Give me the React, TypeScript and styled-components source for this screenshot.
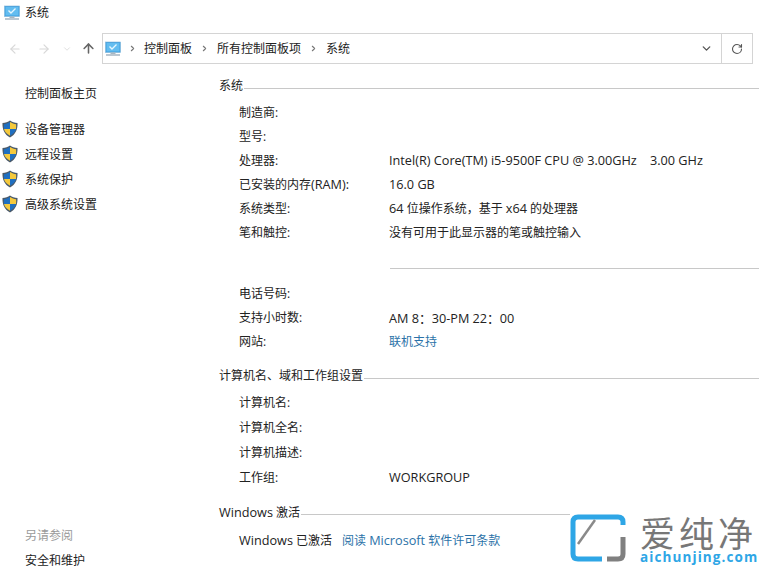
import React from "react";
import styled, { createGlobalStyle } from "styled-components";
import { ArrowLeft, ArrowRight, ArrowUp, ChevronDown, ChevronRight, RotateCw } from "lucide-react";

const GlobalStyle = createGlobalStyle`
  html, body {
    margin: 0;
    padding: 0;
    background: #fff;
  }
  body {
    font-family: "Open Sans", "Noto Sans CJK SC", sans-serif;
    font-size: 12px;
    color: #222;
  }
`;

const MonitorIcon = ({ size }: { size: number }) => (
  <svg width={size} height={size} viewBox="0 0 16 16">
    <rect x="0.5" y="1" width="15" height="10.5" fill="#3f9fe0" stroke="#7fb4d8" strokeWidth="0.6" />
    <rect x="1.5" y="2" width="13" height="8.5" fill="#63bdf0" />
    <path d="M4.5 5.5 L7 8 L11.5 3.5" stroke="#e6f7ff" strokeWidth="1.4" fill="none" />
    <rect x="5.5" y="11.5" width="5" height="1.5" fill="#a9b7c2" />
    <rect x="1" y="13.4" width="14" height="1.2" fill="#8fa3b3" />
  </svg>
);

const ShieldIcon = () => (
  <svg width="16" height="18" viewBox="0 0 16 18">
    <path d="M8 0.5 C10 2 12.5 2.8 15.5 3 C15.8 9.5 13.5 14.5 8 17.5 C2.5 14.5 0.2 9.5 0.5 3 C3.5 2.8 6 2 8 0.5 Z" fill="#4a5a6a" />
    <path d="M8 2 V9 H2 C1.8 7.5 1.8 6 1.9 4.2 C4 4 6 3.3 8 2 Z" fill="#1f6fc0" />
    <path d="M8 2 C10 3.3 12 4 14.1 4.2 C14.2 6 14.2 7.5 14 9 H8 Z" fill="#f5c93c" />
    <path d="M2 9 H8 V15.8 C4.6 14 2.7 11.8 2 9 Z" fill="#f5c93c" />
    <path d="M8 9 H14 C13.3 11.8 11.4 14 8 15.8 Z" fill="#1f6fc0" />
  </svg>
);

const sideTasks = ["设备管理器", "远程设置", "系统保护", "高级系统设置"];

const computerLabels = ["计算机名:", "计算机全名:", "计算机描述:"];

const App = () => {
  return (
    <Page>
      <GlobalStyle />
      <TitleBar>
        <MonitorIcon size={16} />
        <TitleText>系统</TitleText>
      </TitleBar>
      <NavBar>
        <NavButtons>
          <NavGlyph $faded $width={29}><ArrowLeft size={14} /></NavGlyph>
          <NavGlyph $faded $width={29}><ArrowRight size={14} /></NavGlyph>
          <NavGlyph $faded $width={18}><ChevronDown size={10} /></NavGlyph>
          <NavGlyph $width={24}><ArrowUp size={15} strokeWidth={2.5} /></NavGlyph>
        </NavButtons>
        <AddressBox>
          <MonitorIcon size={16} />
          <Crumb $first><ChevronRight size={9} strokeWidth={3} /></Crumb>
          <CrumbText>控制面板</CrumbText>
          <Crumb><ChevronRight size={9} strokeWidth={3} /></Crumb>
          <CrumbText>所有控制面板项</CrumbText>
          <Crumb><ChevronRight size={9} strokeWidth={3} /></Crumb>
          <CrumbText>系统</CrumbText>
          <AddressEnd>
            <ChevronDown size={13} strokeWidth={2.5} color="#555" />
          </AddressEnd>
          <RefreshBox>
            <RotateCw size={12} color="#555" strokeWidth={2.2} />
          </RefreshBox>
        </AddressBox>
      </NavBar>
      <Body>
        <Sidebar>
          <HomeLink>控制面板主页</HomeLink>
          <TaskList>
            {sideTasks.map((task) => (
              <Task key={task}>
                <ShieldIcon />
                <span>{task}</span>
              </Task>
            ))}
          </TaskList>
          <SeeAlso>
            <SeeAlsoTitle>另请参阅</SeeAlsoTitle>
            <span>安全和维护</span>
          </SeeAlso>
        </Sidebar>
        <Main>
          <Section $gap={12}>
            <Heading><span>系统</span></Heading>
            <Rows $step={24} $top={4}>
              <Row><RowLabel>制造商:</RowLabel></Row>
              <Row><RowLabel>型号:</RowLabel></Row>
              <Row>
                <RowLabel>处理器:</RowLabel>
                <Latin>{"Intel(R) Core(TM) i5-9500F CPU @ 3.00GHz    3.00 GHz"}</Latin>
              </Row>
              <Row>
                <RowLabel>已安装的内存<Latin>(RAM):</Latin></RowLabel>
                <Latin>16.0 GB</Latin>
              </Row>
              <Row>
                <RowLabel>系统类型:</RowLabel>
                <RowValue><Latin>64</Latin> 位操作系统，基于 <Latin>x64</Latin> 的处理器</RowValue>
              </Row>
              <Row>
                <RowLabel>笔和触控:</RowLabel>
                <RowValue>没有可用于此显示器的笔或触控输入</RowValue>
              </Row>
            </Rows>
          </Section>
          <SubRule />
          <Rows $step={24}>
            <Row><RowLabel>电话号码:</RowLabel></Row>
            <Row>
              <RowLabel>支持小时数:</RowLabel>
              <Latin>AM 8：30-PM 22：00</Latin>
            </Row>
            <Row>
              <RowLabel>网站:</RowLabel>
              <RowValue as="a" $link>联机支持</RowValue>
            </Row>
          </Rows>
          <Section $gap={13}>
            <Heading><span>计算机名、域和工作组设置</span></Heading>
            <Rows $step={25} $top={3}>
              {computerLabels.map((label) => (
                <Row key={label}><RowLabel>{label}</RowLabel></Row>
              ))}
              <Row>
                <RowLabel>工作组:</RowLabel>
                <Latin>WORKGROUP</Latin>
              </Row>
            </Rows>
          </Section>
          <Section $gap={13}>
            <Heading><span><Latin>Windows</Latin> 激活</span></Heading>
            <Rows $step={33} $top={1}>
              <Row>
                <ActivationText><Latin>Windows</Latin> 已激活</ActivationText>
                <RowValue as="a" $link>阅读 <Latin>Microsoft</Latin> 软件许可条款</RowValue>
              </Row>
              <Row><RowLabel>产品 ID:</RowLabel></Row>
            </Rows>
          </Section>
        </Main>
      </Body>
      <Watermark>
        <svg width="56" height="48" viewBox="0 0 56 48">
          <path d="M53 11 V8 Q53 3 48 3 H8 Q3 3 3 8 V40 Q3 45 8 45 H32" fill="none" stroke="#2ea6e6" strokeWidth="5" />
          <path d="M53 23 V40 Q53 45 48 45 H37" fill="none" stroke="#808080" strokeWidth="5" />
          <path d="M8 30 L25 6" stroke="#8a8a8a" strokeWidth="2.5" />
        </svg>
        <WatermarkText>
          <WatermarkName>爱纯净</WatermarkName>
          <WatermarkUrl>aichunjing.com</WatermarkUrl>
        </WatermarkText>
      </Watermark>
    </Page>
  );
};

export default App;

const Page = styled.div`
  position: relative;
  width: 759px;
  height: 566px;
  overflow: hidden;
  background: #fff;
`;

const TitleBar = styled.div`
  display: flex;
  align-items: center;
  gap: 5px;
  height: 26px;
  padding-left: 4px;
`;

const TitleText = styled.span`
  margin-bottom: 2px;
`;

const NavBar = styled.div`
  display: flex;
  align-items: center;
  height: 31px;
  margin-top: 7px;
`;

const NavButtons = styled.div`
  display: flex;
  align-items: center;
  width: 102px;
`;

const NavGlyph = styled.div<{ $faded?: boolean; $width: number }>`
  display: flex;
  justify-content: center;
  width: ${(p) => p.$width}px;
  color: ${(p) => (p.$faded ? "#d8d8d8" : "#666")};
`;

const AddressBox = styled.div`
  display: flex;
  align-items: center;
  width: 651px;
  height: 31px;
  box-sizing: border-box;
  padding-left: 2px;
  border: 1px solid #d4d4d4;
`;

const CrumbText = styled.span`
  margin-bottom: 2px;
`;

const Crumb = styled.div<{ $first?: boolean }>`
  display: flex;
  justify-content: center;
  width: ${(p) => (p.$first ? 23 : 25)}px;
  color: #777;
`;

const AddressEnd = styled.div`
  display: flex;
  justify-content: center;
  width: 30px;
  margin-left: auto;
`;

const RefreshBox = styled.div`
  display: flex;
  align-items: center;
  justify-content: center;
  width: 30px;
  height: 100%;
  border-left: 1px solid #d4d4d4;
`;

const Body = styled.div`
  display: grid;
  grid-template-columns: 219px 1fr;
  height: 502px;
`;

const Sidebar = styled.aside`
  display: flex;
  flex-direction: column;
  height: 502px;
`;

const HomeLink = styled.div`
  margin: 20px 0 0 25px;
  line-height: 20px;
`;

const TaskList = styled.div`
  display: flex;
  flex-direction: column;
  margin-top: 12px;
  padding-left: 2px;
`;

const Task = styled.div`
  display: flex;
  align-items: center;
  gap: 7px;
  height: 25px;
`;

const SeeAlso = styled.div`
  display: flex;
  flex-direction: column;
  gap: 5px;
  margin-top: auto;
  margin-bottom: -5px;
  padding-left: 25px;
  line-height: 20px;
`;

const SeeAlsoTitle = styled.span`
  color: #9a9a9a;
`;

const Main = styled.main`
  display: flex;
  flex-direction: column;
`;

const Section = styled.section<{ $gap: number }>`
  margin-top: ${(p) => p.$gap}px;
`;

const Heading = styled.div`
  display: flex;
  align-items: center;
  gap: 1px;
  height: 20px;
  line-height: 20px;

  &::after {
    content: "";
    flex: 1;
    height: 1px;
    margin-top: 5px;
    background: #c8c8c8;
  }
`;

const Rows = styled.div<{ $step: number; $top?: number }>`
  display: grid;
  grid-auto-rows: ${(p) => p.$step}px;
  margin-top: ${(p) => p.$top ?? 0}px;
  padding-left: 20px;
`;

const Row = styled.div`
  display: flex;
  align-items: center;
`;

const RowLabel = styled.span`
  width: 150px;
  flex-shrink: 0;
`;

const ActivationText = styled.span`
  width: 103px;
  flex-shrink: 0;
`;

const RowValue = styled.span<{ $link?: boolean }>`
  color: ${(p) => (p.$link ? "#2b72a8" : "#222")};
`;

// Segoe UI runs wider than Open Sans at the same size, so latin runs get a bump
const Latin = styled.span`
  font-size: 12.7px;
  white-space: pre;
`;

const SubRule = styled.div`
  height: 1px;
  margin: 24px 0 12px 171px;
  background: #c8c8c8;
`;

const Watermark = styled.div`
  position: absolute;
  right: 0;
  bottom: 0;
  display: flex;
  align-items: flex-start;
  gap: 14px;
  width: 189px;
  height: 52px;
  background: #fff;
`;

const WatermarkText = styled.div`
  display: flex;
  flex-direction: column;
`;

const WatermarkName = styled.span`
  font-family: "Noto Sans CJK SC", sans-serif;
  font-size: 35px;
  line-height: 36px;
  letter-spacing: 4px;
  color: #777;
`;

const WatermarkUrl = styled.span`
  font-family: "Open Sans", sans-serif;
  font-size: 13.5px;
  font-weight: 700;
  line-height: 14px;
  letter-spacing: 1.1px;
  color: #2ea6e6;
`;
